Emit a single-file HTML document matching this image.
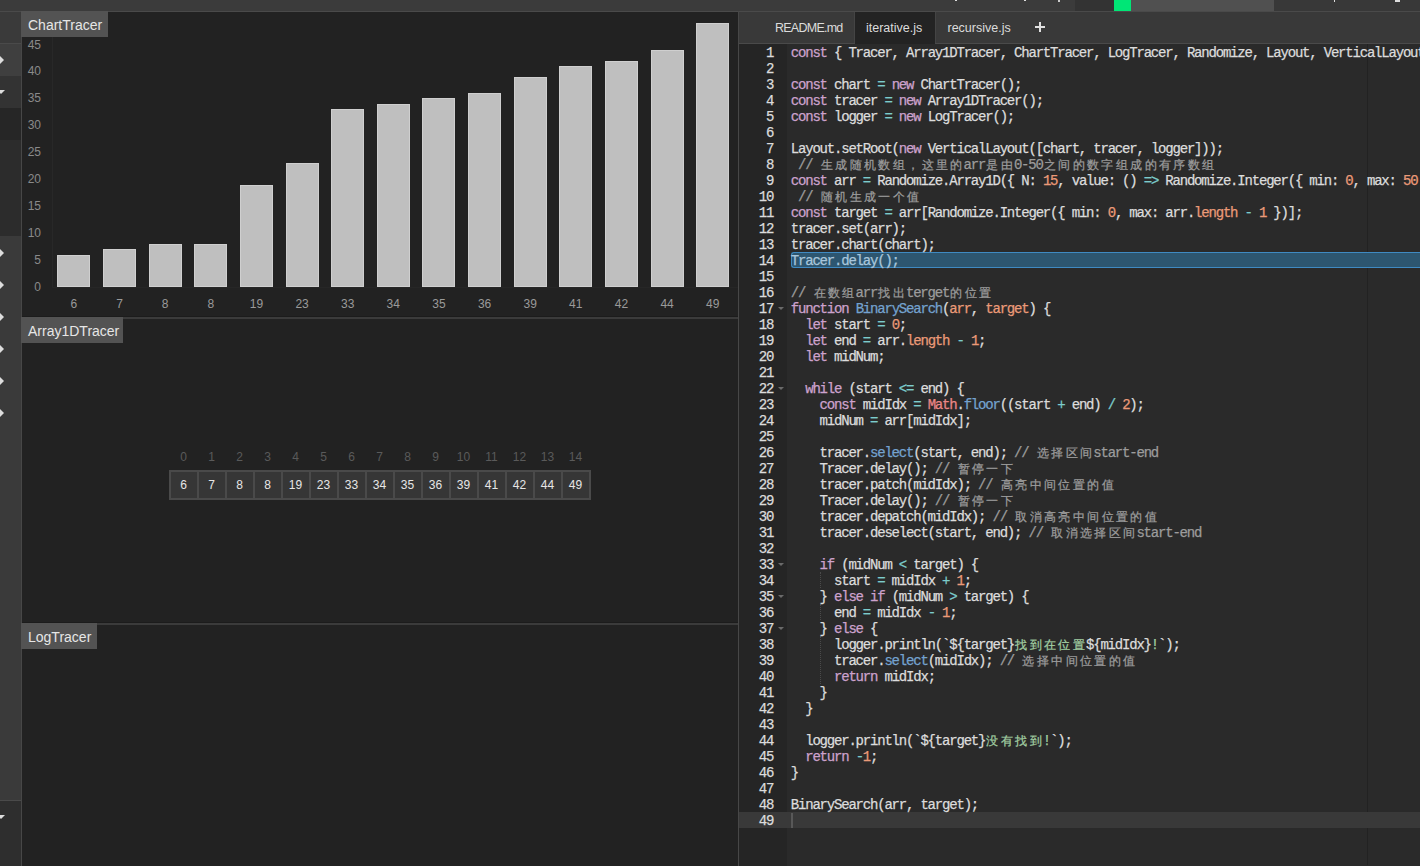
<!DOCTYPE html>
<html><head><meta charset="utf-8">
<style>
*{margin:0;padding:0;box-sizing:border-box}
html,body{width:1420px;height:866px;overflow:hidden;background:#222;font-family:"Liberation Sans",sans-serif}
.abs{position:absolute}
#top{position:absolute;left:0;top:0;width:1420px;height:11px;background:#3b3b3b}
#topline{position:absolute;left:0;top:11px;width:1420px;height:1px;background:#4a4a4a}
#side{position:absolute;left:0;top:12px;width:21px;height:854px;background:#383838}
#sideb{position:absolute;left:21px;top:11px;width:1px;height:855px;background:#474747}
.srow{position:absolute;left:0;width:21px}
.arr-r{position:absolute;left:0;width:0;height:0;border-top:4px solid transparent;border-bottom:4px solid transparent;border-left:4px solid #ddd}
.arr-d{position:absolute;left:0;width:0;height:0;border-left:4px solid transparent;border-right:4px solid transparent;border-top:4px solid #ddd}
.panel{position:absolute;left:22px;width:716px;background:#222;overflow:hidden}
.plabel{position:absolute;left:0;top:0;height:26px;background:#535353;color:#e6e6e6;font-size:14px;line-height:28px;padding-left:7px;white-space:nowrap}
.sepd{position:absolute;left:22px;width:716px;height:1px;background:#1c1c1c}
.sepl{position:absolute;left:22px;width:716px;height:2px;background:#3b3b3b}
.bar{position:absolute;background:#bfbfbf;box-shadow:inset 0 0 0 1px #cfcfcf}
.yl{position:absolute;left:0;width:20px;text-align:right;font-size:12px;line-height:16px;color:#8a8a8a}
.xl{position:absolute;top:296px;width:40px;text-align:center;font-size:12px;line-height:16px;color:#9a9a9a}
.cell{position:absolute;top:471px;width:28px;height:28px;border:1px solid #4a4a4a;color:#e6e6e6;font-size:12px;line-height:26px;text-align:center}
.idx{position:absolute;top:449px;width:28px;text-align:center;font-size:12px;line-height:16px;color:#5a5a5a}
#editor{position:absolute;left:739px;top:44px;width:681px;height:822px;background:#2a2a2a;overflow:hidden}
#gutter{position:absolute;left:739px;top:44px;width:48px;height:822px;background:#252525}
#edb{position:absolute;left:738px;top:11px;width:1px;height:855px;background:#474747}
.gn{position:absolute;left:739px;width:34.2px;height:16px;text-align:right;font-family:"Liberation Mono",monospace;font-size:14px;letter-spacing:-1.2px;line-height:16px;color:#dcdcdc;-webkit-text-stroke:0.25px currentColor}
.fold{position:absolute;left:778px;width:0;height:0;border-left:3px solid transparent;border-right:3px solid transparent;border-top:3px solid #6a6a6a}
.ln{position:absolute;left:790.8px;height:16px;white-space:pre;font-family:"Liberation Mono",monospace;font-size:14px;letter-spacing:-1.2px;line-height:16px;color:#dcdcdc;-webkit-text-stroke:0.25px currentColor}
.ln i{font-style:normal;display:inline-block;width:14.4px;text-align:center;font-size:12px;letter-spacing:0}
.ln b{font-weight:normal}
.hl,.hl b{color:#a8c6dc !important} .k{color:#cda2cd} .o{color:#7ccccc} .n{color:#eb9a78} .c{color:#9c9c9c} .s{color:#a2cfa2} .f{color:#74a2cf} .v{color:#ec8686}
#tabs{position:absolute;left:739px;top:12px;width:681px;height:31px;background:#393939}
#tabsb{position:absolute;left:739px;top:43px;width:681px;height:1px;background:#4a4a4a}
.tab{position:absolute;top:12.7px;height:31px;line-height:31px;font-size:12.5px;color:#dcdcdc;white-space:nowrap}
</style></head><body>
<div id="top"></div>
<div id="topline"></div>
<div class="abs" style="left:1075px;top:0;width:39px;height:11px;background:#333"></div>
<div class="abs" style="left:1114px;top:0;width:17px;height:11px;background:#00e676"></div>
<div class="abs" style="left:1131px;top:0;width:143px;height:11px;background:#505050"></div>
<div class="abs" style="left:1274px;top:0;width:146px;height:11px;background:#383838"></div>
<div class="abs" style="left:955px;top:0;width:2px;height:1px;background:#ddd"></div>
<div class="abs" style="left:1024px;top:0;width:2px;height:1px;background:#ddd"></div>
<div class="abs" style="left:1058px;top:0;width:2px;height:2px;background:#ccc"></div>
<div class="abs" style="left:1334px;top:0;width:1px;height:2px;background:#ddd"></div>
<div class="abs" style="left:1395px;top:0;width:5px;height:2px;background:#ddd"></div>

<div id="side"></div>
<div class="srow" style="top:12px;height:31px;background:#3a3a3a"></div>
<div class="srow" style="top:43px;height:1px;background:#4a4a4a"></div>
<div class="srow" style="top:44px;height:32px;background:#3f3f3f"></div>
<div class="srow" style="top:76px;height:32px;background:#333"></div>
<div class="srow" style="top:108px;height:32px;background:#262626"></div>
<div class="srow" style="top:140px;height:96px;background:#2c2c2c"></div>
<div class="srow" style="top:236px;height:564px;background:#3a3a3a"></div>
<div class="srow" style="top:800px;height:1px;background:#4a4a4a"></div>
<div class="srow" style="top:801px;height:65px;background:#2e2e2e"></div>
<div class="arr-r" style="top:56px"></div>
<div class="arr-d" style="top:90px;left:-3px"></div>
<div class="arr-r" style="top:249px"></div><div class="arr-r" style="top:281px"></div><div class="arr-r" style="top:313px"></div><div class="arr-r" style="top:345px"></div><div class="arr-r" style="top:377px"></div><div class="arr-r" style="top:409px"></div>
<div class="arr-d" style="top:815px;left:-3px"></div>
<div id="sideb"></div>

<div class="abs" style="left:22px;top:12px;width:716px;height:304px;overflow:hidden">
 <div class="abs" style="left:30px;top:25px;width:1px;height:250px;background:#282828"></div>
 <div class="abs" style="left:30px;top:275px;width:686px;height:1px;background:#262626"></div>
</div>
<div class="abs" style="left:0;top:0;width:738px;height:866px">
  <div class="bar" style="left:57.4px;top:254.7px;width:33px;height:32.3px"></div><div class="bar" style="left:103.0px;top:249.3px;width:33px;height:37.7px"></div><div class="bar" style="left:148.7px;top:243.9px;width:33px;height:43.1px"></div><div class="bar" style="left:194.3px;top:243.9px;width:33px;height:43.1px"></div><div class="bar" style="left:239.9px;top:184.6px;width:33px;height:102.4px"></div><div class="bar" style="left:285.6px;top:163.0px;width:33px;height:124.0px"></div><div class="bar" style="left:331.2px;top:109.1px;width:33px;height:177.9px"></div><div class="bar" style="left:376.8px;top:103.7px;width:33px;height:183.3px"></div><div class="bar" style="left:422.4px;top:98.4px;width:33px;height:188.6px"></div><div class="bar" style="left:468.1px;top:93.0px;width:33px;height:194.0px"></div><div class="bar" style="left:513.7px;top:76.8px;width:33px;height:210.2px"></div><div class="bar" style="left:559.3px;top:66.0px;width:33px;height:221.0px"></div><div class="bar" style="left:605.0px;top:60.6px;width:33px;height:226.4px"></div><div class="bar" style="left:650.6px;top:49.8px;width:33px;height:237.2px"></div><div class="bar" style="left:696.2px;top:22.9px;width:33px;height:264.1px"></div>
  <div class="abs" style="left:21px;top:0"><div class="yl" style="top:279.0px">0</div><div class="yl" style="top:252.1px">5</div><div class="yl" style="top:225.1px">10</div><div class="yl" style="top:198.2px">15</div><div class="yl" style="top:171.2px">20</div><div class="yl" style="top:144.2px">25</div><div class="yl" style="top:117.3px">30</div><div class="yl" style="top:90.4px">35</div><div class="yl" style="top:63.4px">40</div><div class="yl" style="top:36.5px">45</div></div>
  <div class="xl" style="left:53.9px">6</div><div class="xl" style="left:99.5px">7</div><div class="xl" style="left:145.2px">8</div><div class="xl" style="left:190.8px">8</div><div class="xl" style="left:236.4px">19</div><div class="xl" style="left:282.1px">23</div><div class="xl" style="left:327.7px">33</div><div class="xl" style="left:373.3px">34</div><div class="xl" style="left:418.9px">35</div><div class="xl" style="left:464.6px">36</div><div class="xl" style="left:510.2px">39</div><div class="xl" style="left:555.8px">41</div><div class="xl" style="left:601.5px">42</div><div class="xl" style="left:647.1px">44</div><div class="xl" style="left:692.7px">49</div>
</div>
<div class="plabel" style="left:21px;top:11px;width:87px">ChartTracer</div>
<div class="sepd" style="top:316px"></div>
<div class="sepl" style="top:317px"></div>
<div class="plabel" style="left:21px;top:317px;width:102px">Array1DTracer</div>
<div class="idx" style="left:169.50px">0</div><div class="idx" style="left:197.50px">1</div><div class="idx" style="left:225.50px">2</div><div class="idx" style="left:253.50px">3</div><div class="idx" style="left:281.50px">4</div><div class="idx" style="left:309.50px">5</div><div class="idx" style="left:337.50px">6</div><div class="idx" style="left:365.50px">7</div><div class="idx" style="left:393.50px">8</div><div class="idx" style="left:421.50px">9</div><div class="idx" style="left:449.50px">10</div><div class="idx" style="left:477.50px">11</div><div class="idx" style="left:505.50px">12</div><div class="idx" style="left:533.50px">13</div><div class="idx" style="left:561.50px">14</div>
<div class="abs" style="left:168.5px;top:470px;width:422px;height:30px;border:1px solid #4a4a4a;background:#363636"></div>
<div class="cell" style="left:169.50px">6</div><div class="cell" style="left:197.50px">7</div><div class="cell" style="left:225.50px">8</div><div class="cell" style="left:253.50px">8</div><div class="cell" style="left:281.50px">19</div><div class="cell" style="left:309.50px">23</div><div class="cell" style="left:337.50px">33</div><div class="cell" style="left:365.50px">34</div><div class="cell" style="left:393.50px">35</div><div class="cell" style="left:421.50px">36</div><div class="cell" style="left:449.50px">39</div><div class="cell" style="left:477.50px">41</div><div class="cell" style="left:505.50px">42</div><div class="cell" style="left:533.50px">44</div><div class="cell" style="left:561.50px">49</div>
<div class="sepd" style="top:622px"></div>
<div class="sepl" style="top:623px"></div>
<div class="plabel" style="left:21px;top:623px;width:76px">LogTracer</div>

<div id="edb"></div>
<div id="tabs"></div>
<div id="tabsb"></div>
<div class="abs" style="left:854px;top:12px;width:1px;height:31px;background:#444"></div>
<div class="abs" style="left:855px;top:12px;width:80px;height:32px;background:#232323"></div>
<div class="abs" style="left:935px;top:12px;width:1px;height:31px;background:#444"></div>
<div class="tab" style="left:775px;letter-spacing:-0.75px">README.md</div>
<div class="tab" style="left:866px">iterative.js</div>
<div class="tab" style="left:947.5px">recursive.js</div>
<div class="abs" style="left:1035px;top:26px;width:10px;height:2px;background:#e0e0e0"></div>
<div class="abs" style="left:1039px;top:22px;width:2px;height:10px;background:#e0e0e0"></div>

<div id="editor"></div>
<div id="gutter"></div>
<div class="abs" style="left:1367px;top:44px;width:1px;height:821px;background:#222"></div>
<div class="abs" style="left:739px;top:812px;width:681px;height:16px;background:#393939"></div>
<div class="abs" style="left:791px;top:252px;width:629px;height:16px;background:#2d5670;border:1px solid #3f8ac2;border-right:none;border-radius:3px 0 0 3px"></div>
<div class="gn" style="top:45px">1</div><div class="gn" style="top:61px">2</div><div class="gn" style="top:77px">3</div><div class="gn" style="top:93px">4</div><div class="gn" style="top:109px">5</div><div class="gn" style="top:125px">6</div><div class="gn" style="top:141px">7</div><div class="gn" style="top:157px">8</div><div class="gn" style="top:173px">9</div><div class="gn" style="top:189px">10</div><div class="gn" style="top:205px">11</div><div class="gn" style="top:221px">12</div><div class="gn" style="top:237px">13</div><div class="gn" style="top:253px">14</div><div class="gn" style="top:269px">15</div><div class="gn" style="top:285px">16</div><div class="gn" style="top:301px">17</div><div class="fold" style="top:307px"></div><div class="gn" style="top:317px">18</div><div class="gn" style="top:333px">19</div><div class="gn" style="top:349px">20</div><div class="gn" style="top:365px">21</div><div class="gn" style="top:381px">22</div><div class="fold" style="top:387px"></div><div class="gn" style="top:397px">23</div><div class="gn" style="top:413px">24</div><div class="gn" style="top:429px">25</div><div class="gn" style="top:445px">26</div><div class="gn" style="top:461px">27</div><div class="gn" style="top:477px">28</div><div class="gn" style="top:493px">29</div><div class="gn" style="top:509px">30</div><div class="gn" style="top:525px">31</div><div class="gn" style="top:541px">32</div><div class="gn" style="top:557px">33</div><div class="fold" style="top:563px"></div><div class="gn" style="top:573px">34</div><div class="gn" style="top:589px">35</div><div class="fold" style="top:595px"></div><div class="gn" style="top:605px">36</div><div class="gn" style="top:621px">37</div><div class="fold" style="top:627px"></div><div class="gn" style="top:637px">38</div><div class="gn" style="top:653px">39</div><div class="gn" style="top:669px">40</div><div class="gn" style="top:685px">41</div><div class="gn" style="top:701px">42</div><div class="gn" style="top:717px">43</div><div class="gn" style="top:733px">44</div><div class="gn" style="top:749px">45</div><div class="gn" style="top:765px">46</div><div class="gn" style="top:781px">47</div><div class="gn" style="top:797px">48</div><div class="gn" style="top:813px">49</div>
<div class="abs" style="left:820px;top:572px;width:0;height:16px;border-left:1px dotted #4a4a4a"></div>
<div class="abs" style="left:820px;top:604px;width:0;height:16px;border-left:1px dotted #4a4a4a"></div>
<div class="abs" style="left:820px;top:636px;width:0;height:48px;border-left:1px dotted #4a4a4a"></div>
<div class="ln" style="top:45px"><b class="k">const</b> { Tracer, Array1DTracer, ChartTracer, LogTracer, Randomize, Layout, VerticalLayout } <b class="o">=</b> <b class="f">require</b>(<b class="s">&#x27;algorithm-visualizer&#x27;</b>);</div><div class="ln" style="top:61px"></div><div class="ln" style="top:77px"><b class="k">const</b> chart <b class="o">=</b> <b class="k">new</b> ChartTracer();</div><div class="ln" style="top:93px"><b class="k">const</b> tracer <b class="o">=</b> <b class="k">new</b> Array1DTracer();</div><div class="ln" style="top:109px"><b class="k">const</b> logger <b class="o">=</b> <b class="k">new</b> LogTracer();</div><div class="ln" style="top:125px"></div><div class="ln" style="top:141px">Layout.setRoot(<b class="k">new</b> VerticalLayout([chart, tracer, logger]));</div><div class="ln" style="top:157px"> <b class="c">// <i>生</i><i>成</i><i>随</i><i>机</i><i>数</i><i>组</i><i>，</i><i>这</i><i>里</i><i>的</i>arr<i>是</i><i>由</i>0-50<i>之</i><i>间</i><i>的</i><i>数</i><i>字</i><i>组</i><i>成</i><i>的</i><i>有</i><i>序</i><i>数</i><i>组</i></b></div><div class="ln" style="top:173px"><b class="k">const</b> arr <b class="o">=</b> Randomize.Array1D({ N: <b class="n">15</b>, value: () <b class="o">=&gt;</b> Randomize.Integer({ min: <b class="n">0</b>, max: <b class="n">50</b> }), sorted: <b class="n">true</b> });</div><div class="ln" style="top:189px"> <b class="c">// <i>随</i><i>机</i><i>生</i><i>成</i><i>一</i><i>个</i><i>值</i></b></div><div class="ln" style="top:205px"><b class="k">const</b> target <b class="o">=</b> arr[Randomize.Integer({ min: <b class="n">0</b>, max: arr.<b class="n">length</b> <b class="o">-</b> <b class="n">1</b> })];</div><div class="ln" style="top:221px">tracer.set(arr);</div><div class="ln" style="top:237px">tracer.chart(chart);</div><div class="ln hl" style="top:253px">Tracer.delay();</div><div class="ln" style="top:269px"></div><div class="ln" style="top:285px"><b class="c">// <i>在</i><i>数</i><i>组</i>arr<i>找</i><i>出</i>terget<i>的</i><i>位</i><i>置</i></b></div><div class="ln" style="top:301px"><b class="k">function</b> <b class="f">BinarySearch</b>(<b class="n">arr</b>, <b class="n">target</b>) {</div><div class="ln" style="top:317px">  <b class="k">let</b> start <b class="o">=</b> <b class="n">0</b>;</div><div class="ln" style="top:333px">  <b class="k">let</b> end <b class="o">=</b> arr.<b class="n">length</b> <b class="o">-</b> <b class="n">1</b>;</div><div class="ln" style="top:349px">  <b class="k">let</b> midNum;</div><div class="ln" style="top:365px"></div><div class="ln" style="top:381px">  <b class="k">while</b> (start <b class="o">&lt;=</b> end) {</div><div class="ln" style="top:397px">    <b class="k">const</b> midIdx <b class="o">=</b> <b class="v">Math</b>.<b class="f">floor</b>((start <b class="o">+</b> end) <b class="o">/</b> <b class="n">2</b>);</div><div class="ln" style="top:413px">    midNum <b class="o">=</b> arr[midIdx];</div><div class="ln" style="top:429px"></div><div class="ln" style="top:445px">    tracer.<b class="f">select</b>(start, end); <b class="c">// <i>选</i><i>择</i><i>区</i><i>间</i>start-end</b></div><div class="ln" style="top:461px">    Tracer.delay(); <b class="c">// <i>暂</i><i>停</i><i>一</i><i>下</i></b></div><div class="ln" style="top:477px">    tracer.patch(midIdx); <b class="c">// <i>高</i><i>亮</i><i>中</i><i>间</i><i>位</i><i>置</i><i>的</i><i>值</i></b></div><div class="ln" style="top:493px">    Tracer.delay(); <b class="c">// <i>暂</i><i>停</i><i>一</i><i>下</i></b></div><div class="ln" style="top:509px">    tracer.depatch(midIdx); <b class="c">// <i>取</i><i>消</i><i>高</i><i>亮</i><i>中</i><i>间</i><i>位</i><i>置</i><i>的</i><i>值</i></b></div><div class="ln" style="top:525px">    tracer.deselect(start, end); <b class="c">// <i>取</i><i>消</i><i>选</i><i>择</i><i>区</i><i>间</i>start-end</b></div><div class="ln" style="top:541px"></div><div class="ln" style="top:557px">    <b class="k">if</b> (midNum <b class="o">&lt;</b> target) {</div><div class="ln" style="top:573px">      start <b class="o">=</b> midIdx <b class="o">+</b> <b class="n">1</b>;</div><div class="ln" style="top:589px">    } <b class="k">else</b> <b class="k">if</b> (midNum <b class="o">&gt;</b> target) {</div><div class="ln" style="top:605px">      end <b class="o">=</b> midIdx <b class="o">-</b> <b class="n">1</b>;</div><div class="ln" style="top:621px">    } <b class="k">else</b> {</div><div class="ln" style="top:637px">      logger.println(`${target}<b class="s"><i>找</i><i>到</i><i>在</i><i>位</i><i>置</i></b>${midIdx}<b class="s">!</b>`);</div><div class="ln" style="top:653px">      tracer.<b class="f">select</b>(midIdx); <b class="c">// <i>选</i><i>择</i><i>中</i><i>间</i><i>位</i><i>置</i><i>的</i><i>值</i></b></div><div class="ln" style="top:669px">      <b class="k">return</b> midIdx;</div><div class="ln" style="top:685px">    }</div><div class="ln" style="top:701px">  }</div><div class="ln" style="top:717px"></div><div class="ln" style="top:733px">  logger.println(`${target}<b class="s"><i>没</i><i>有</i><i>找</i><i>到</i>!</b>`);</div><div class="ln" style="top:749px">  <b class="k">return</b> <b class="o">-</b><b class="n">1</b>;</div><div class="ln" style="top:765px">}</div><div class="ln" style="top:781px"></div><div class="ln" style="top:797px">BinarySearch(arr, target);</div><div class="ln" style="top:813px"></div>
<div class="abs" style="left:791px;top:813px;width:2px;height:15px;background:#585858"></div>
</body></html>
